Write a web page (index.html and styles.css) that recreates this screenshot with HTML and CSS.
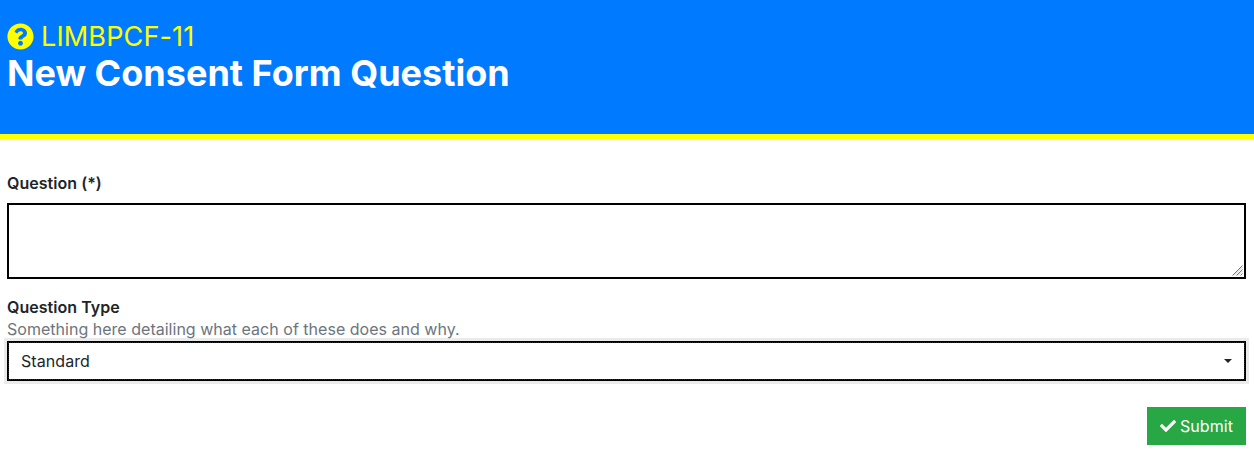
FILE: index.html
```html
<!DOCTYPE html>
<html lang="en">
<head>
<meta charset="utf-8">
<title>New Consent Form Question</title>
<link rel="stylesheet" href="styles.css">
</head>
<body>
<header class="page-header">
  <div class="reference">
    <svg class="question-icon" viewBox="0 0 512 512" aria-hidden="true"><path fill="currentColor" d="M504 256c0 136.997-111.043 248-248 248S8 392.997 8 256C8 119.083 119.043 8 256 8s248 111.083 248 248zM262.655 90c-54.497 0-89.255 22.957-116.549 63.758-3.536 5.286-2.353 12.415 2.715 16.258l34.699 26.31c5.205 3.947 12.621 3.008 16.665-2.122 17.864-22.658 30.113-35.797 57.303-35.797 20.429 0 45.698 13.148 45.698 32.958 0 14.976-12.363 22.667-32.534 33.976C247.128 238.528 216 254.941 216 296v4c0 6.627 5.373 12 12 12h56c6.627 0 12-5.373 12-12v-1.333c0-28.462 83.186-29.647 83.186-106.667 0-58.002-60.165-102-116.531-102zM256 338c-25.365 0-46 20.635-46 46 0 25.364 20.635 46 46 46s46-20.636 46-46c0-25.365-20.635-46-46-46z"/></svg>
    <span>LIMBPCF-11</span>
  </div>
  <h1 class="title">New Consent Form Question</h1>
</header>
<form class="question-form">
  <label class="label" for="question">Question (*)</label>
  <div class="input-wrap">
    <textarea class="question-input" id="question"></textarea>
    <svg class="resize-grip" viewBox="0 0 11 11" aria-hidden="true"><path d="M.5 10.5l10-10M4.5 10.5l6-6M8.5 10.5l2-2" fill="none" stroke="#777"/><path d="M2 10.5l8.5-8.5M6 10.5l4.5-4.5" fill="none" stroke="#ccc"/></svg>
  </div>
  <div class="label type-label">Question Type</div>
  <div class="hint">Something here detailing what each of these does and why.</div>
  <button class="type-select" type="button"><span>Standard</span><span class="caret"></span></button>
  <div class="actions">
    <button class="submit" type="button"><svg class="check-icon" viewBox="0 0 512 512" aria-hidden="true"><path fill="currentColor" d="M173.898 439.404l-166.4-166.4c-9.997-9.997-9.997-26.206 0-36.204l36.203-36.204c9.997-9.998 26.207-9.998 36.204 0L192 312.69 432.095 72.596c9.997-9.997 26.207-9.997 36.204 0l36.203 36.204c9.997 9.997 9.997 26.206 0 36.204l-294.4 294.401c-9.998 9.997-26.207 9.997-36.204-.001z"/></svg><span>Submit</span></button>
  </div>
</form>
</body>
</html>
```
FILE: styles.css
```css
* { box-sizing: border-box; }
body {
  margin: 0;
  background: #fff;
  color: #212529;
  font: 400 16px/24px Inter, sans-serif;
  letter-spacing: .02px;
}
.page-header {
  height: 139px;
  padding: 19px 7px 0;
  background: #007bff;
  border-bottom: 5px solid #ff0;
}
.reference {
  display: flex;
  align-items: center;
  gap: 7px;
  height: 34px;
  color: #ff0;
  font-size: 27px;
  line-height: 34px;
  letter-spacing: .15px;
}
.reference span { padding-top: 2px; }
.question-icon { width: 27px; height: 27px; }
.title {
  margin: 0;
  color: #fff;
  font-size: 36px;
  font-weight: 700;
  line-height: 40px;
  letter-spacing: .02px;
}
.question-form { padding: 32px 8px 0 7px; }
.label { display: block; font-weight: 600; letter-spacing: .04px; }
.input-wrap { position: relative; margin: 8px 0 16px; }
.question-input {
  display: block;
  width: 100%;
  height: 76px;
  padding: 6px 12px;
  border: 2px solid #000;
  border-radius: 0;
  font: inherit;
  resize: none;
}
.resize-grip { position: absolute; right: 3px; bottom: 3px; width: 11px; height: 11px; }
.hint { height: 22px; line-height: 20px; color: #6c757d; }
.type-select {
  display: flex;
  align-items: center;
  justify-content: space-between;
  width: 100%;
  height: 40px;
  padding: 0 12px;
  border: 2px solid #000;
  outline: 1px dotted #212529;
  outline-offset: -2px;
  background: #fff;
  box-shadow: 0 0 0 3px #ebebeb;
  color: inherit;
  font: inherit;
  letter-spacing: .08px;
}
.caret {
  border-top: 4.8px solid #212529;
  border-right: 4.8px solid transparent;
  border-left: 4.8px solid transparent;
}
.actions { display: flex; justify-content: flex-end; margin-top: 26px; }
.submit {
  display: flex;
  align-items: center;
  gap: 4px;
  height: 38px;
  padding: 0 13px;
  border: 0;
  background: #28a745;
  color: #fff;
  font: inherit;
  letter-spacing: .06px;
}
.check-icon { width: 16px; height: 16px; }
```
